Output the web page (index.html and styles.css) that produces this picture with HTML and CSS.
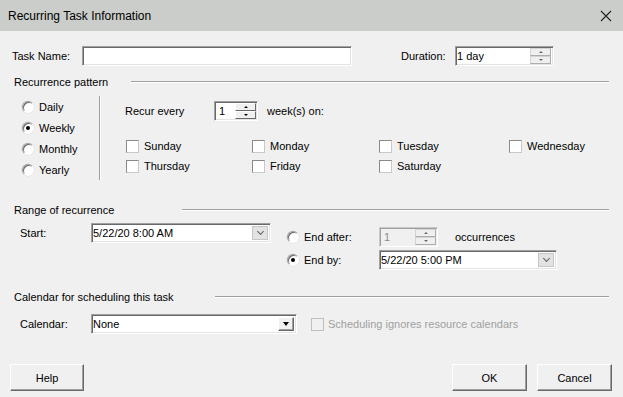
FILE: index.html
```html
<!DOCTYPE html>
<html lang="en">

<head>
    <meta charset="UTF-8">
    <meta name="viewport" content="width=device-width, initial-scale=1.0">
    <title>Recurring Task Information</title>
    <link rel="stylesheet" href="styles.css">
</head>

<body>
    <div class="dialog">
        <!-- title bar -->
        <div class="titlebar">
            <span class="title">Recurring Task Information</span>
            <svg class="close" width="12" height="12" viewBox="0 0 12 12">
                <path d="M1 1 L11 11 M11 1 L1 11" stroke="#222" stroke-width="1.1" fill="none" />
            </svg>
        </div>

        <div class="task-row">
            <label class="lbl-task">Task Name:</label>
            <div class="field task-name"></div>
            <label class="lbl-dur">Duration:</label>
            <div class="field dur">
                <span class="val">1 day</span>
                <div class="spin flat">
                    <span class="sb"><i class="up"></i></span>
                    <span class="sb"><i class="down"></i></span>
                </div>
            </div>
        </div>

        <div class="group-head">
            <span>Recurrence pattern</span>
            <span class="rule r1"></span>
        </div>

        <div class="pattern">
            <div class="freq">
                <div class="opt"><span class="radio"></span>Daily</div>
                <div class="opt"><span class="radio on"></span>Weekly</div>
                <div class="opt"><span class="radio"></span>Monthly</div>
                <div class="opt"><span class="radio"></span>Yearly</div>
            </div>
            <div class="vsep"></div>
            <div class="weekly">
                <div class="recur">
                    <span class="recur-lbl">Recur every</span>
                    <div class="field every">
                        <span class="val">1</span>
                        <div class="spin">
                            <span class="sb"><i class="up"></i></span>
                            <span class="sb"><i class="down"></i></span>
                        </div>
                    </div>
                    <span class="weeks">week(s) on:</span>
                </div>
                <div class="days">
                    <div class="opt"><span class="check"></span>Sunday</div>
                    <div class="opt"><span class="check"></span>Monday</div>
                    <div class="opt"><span class="check"></span>Tuesday</div>
                    <div class="opt"><span class="check"></span>Wednesday</div>
                    <div class="opt"><span class="check"></span>Thursday</div>
                    <div class="opt"><span class="check"></span>Friday</div>
                    <div class="opt"><span class="check"></span>Saturday</div>
                </div>
            </div>
        </div>

        <div class="group-head g2">
            <span>Range of recurrence</span>
            <span class="rule r2"></span>
        </div>

        <div class="range">
            <div class="start">
                <label class="lbl-start">Start:</label>
                <div class="field combo start-combo">
                    <span class="val">5/22/20 8:00 AM</span>
                    <span class="drop"><i class="chev"></i></span>
                </div>
            </div>
            <div class="ends">
                <div class="end-row">
                    <span class="opt end-opt"><span class="radio"></span>End after:</span>
                    <div class="field occ disabled">
                        <span class="val">1</span>
                        <div class="spin flat">
                            <span class="sb"><i class="up"></i></span>
                            <span class="sb"><i class="down"></i></span>
                        </div>
                    </div>
                    <span class="occ-lbl">occurrences</span>
                </div>
                <div class="end-row by">
                    <span class="opt end-opt"><span class="radio on"></span>End by:</span>
                    <div class="field combo end-combo">
                        <span class="val">5/22/20 5:00 PM</span>
                        <span class="drop"><i class="chev"></i></span>
                    </div>
                </div>
            </div>
        </div>

        <div class="group-head g3">
            <span>Calendar for scheduling this task</span>
            <span class="rule r3"></span>
        </div>

        <div class="cal-row">
            <label class="lbl-start">Calendar:</label>
            <div class="field combo cal-combo">
                <span class="val">None</span>
                <span class="drop classic"><i class="tri"></i></span>
            </div>
            <div class="opt off"><span class="check"></span>Scheduling ignores resource calendars</div>
        </div>

        <div class="buttons">
            <button type="button" class="btn help">Help</button>
            <button type="button" class="btn ok">OK</button>
            <button type="button" class="btn">Cancel</button>
        </div>
    </div>
</body>

</html>
```

FILE: styles.css
```css
* {
    margin: 0;
    padding: 0;
    box-sizing: border-box;
}

body {
    width: 623px;
    height: 397px;
    overflow: hidden;
    background-color: #f0f0f0;
    font-family: "Liberation Sans", Arial, sans-serif;
    font-size: 11px;
    color: #000;
}

.dialog {
    width: 623px;
    height: 397px;
}

/* title bar */
.titlebar {
    height: 31px;
    background-color: #cbcdca;
    display: flex;
    align-items: center;
    justify-content: space-between;
    padding: 0 11px 0 8px;
}

.title {
    font-size: 12px;
}

/* common bits */
.field {
    position: relative;
    height: 20px;
    background-color: #fff;
    border: 1px solid;
    border-color: #a0a0a0 #fff #fff #a0a0a0;
    box-shadow: inset 1px 1px 0 #696969, inset -1px -1px 0 #e3e3e3;
    display: flex;
    align-items: center;
}

.field .val {
    padding-left: 3px;
    font-size: 11px;
}

.opt {
    display: flex;
    align-items: center;
    white-space: nowrap;
}

.radio {
    width: 12px;
    height: 12px;
    border-radius: 50%;
    background-color: #fff;
    border: 1px solid;
    border-color: #a0a0a0 #fff #fff #a0a0a0;
    box-shadow: inset 1px 1px 0 #696969, 0 0 0 0.5px #d8d8d8;
    margin-right: 5px;
    display: flex;
    align-items: center;
    justify-content: center;
}

.radio.on::after {
    content: "";
    width: 4px;
    height: 4px;
    border-radius: 50%;
    background-color: #000;
}

.check {
    width: 13px;
    height: 13px;
    background-color: #fff;
    border: 1px solid #8a8a8a;
    border-right-color: #c8c8c8;
    border-bottom-color: #c8c8c8;
    margin-right: 5px;
}

/* spin buttons */
.spin {
    position: absolute;
    right: 1px;
    top: 1px;
    width: 21px;
    height: 16px;
    display: flex;
    flex-direction: column;
}

.sb {
    flex: 1;
    background-color: #f0f0f0;
    border: 1px solid;
    border-color: #fff #696969 #696969 #fff;
    display: flex;
    align-items: center;
    justify-content: center;
}

.spin.flat .sb {
    border-color: #d4d4d4 #adadad #adadad #d4d4d4;
    background-color: #efefef;
}

.sb i {
    width: 0;
    height: 0;
    border-left: 2px solid transparent;
    border-right: 2px solid transparent;
}

.sb i.up {
    border-bottom: 2px solid #000;
}

.sb i.down {
    border-top: 2px solid #000;
}

.spin.flat .sb i.up {
    border-bottom-color: #6a6a6a;
}

.spin.flat .sb i.down {
    border-top-color: #6a6a6a;
}

/* combo dropdown */
.drop {
    position: absolute;
    right: 2px;
    top: 2px;
    width: 16px;
    height: 14px;
    background-color: #e2e2e2;
    border: 1px solid #c6c6c6;
    display: flex;
    align-items: center;
    justify-content: center;
}

.chev {
    width: 5px;
    height: 5px;
    border-right: 1px solid #606060;
    border-bottom: 1px solid #606060;
    transform: translateY(-2px) rotate(45deg);
}

.drop.classic {
    background-color: #f0f0f0;
    border-color: #fff #696969 #696969 #fff;
    box-shadow: inset -1px -1px 0 #a0a0a0;
}

.tri {
    width: 0;
    height: 0;
    border-left: 3.5px solid transparent;
    border-right: 3.5px solid transparent;
    border-top: 4px solid #000;
}

/* task row */
.task-row {
    display: flex;
    align-items: center;
    margin-top: 15px;
    padding-left: 12px;
    height: 20px;
}

.lbl-task {
    width: 70px;
}

.task-name {
    width: 270px;
}

.lbl-dur {
    margin-left: 49px;
    width: 54px;
}

.dur {
    width: 99px;
}

.dur .val {
    padding-left: 1px;
}

.dur .spin {
    right: 2px;
}

/* group headings */
.group-head {
    display: flex;
    align-items: center;
    height: 14px;
    margin-top: 9px;
    padding: 0 14px;
}

.rule {
    flex: 1;
    height: 2px;
    border-top: 1px solid #a0a0a0;
    border-bottom: 1px solid #fff;
}

.r1 {
    margin-left: 23px;
}

.r2 {
    margin-left: 68px;
}

.r3 {
    margin-left: 41px;
}

.g2 {
    margin-top: 23px;
}

.g3 {
    margin-top: 20px;
}

/* recurrence pattern */
.pattern {
    display: flex;
    height: 84px;
    margin-top: 7px;
}

.freq {
    width: 99px;
    padding-left: 22px;
}

.freq .opt {
    height: 21px;
}

.vsep {
    width: 2px;
    border-left: 1px solid #a0a0a0;
    border-right: 1px solid #fff;
}

.weekly {
    padding-left: 24px;
}

.recur {
    display: flex;
    align-items: center;
    margin-top: 5px;
    height: 20px;
}

.recur-lbl {
    width: 89px;
}

.every {
    width: 44px;
}

.every .val {
    padding-left: 4px;
}

.every .spin {
    right: 1px;
}

.weeks {
    margin-left: 9px;
}

.days {
    display: grid;
    grid-template-columns: 126px 127px 130px auto;
    grid-auto-rows: 20px;
    margin-top: 15px;
    margin-left: 1px;
}

.days .check {
    margin-right: 5px;
}

/* range of recurrence */
.range {
    display: flex;
    margin-top: 6px;
    height: 47px;
}

.start {
    display: flex;
    align-items: center;
    height: 20px;
    padding-left: 20px;
}

.lbl-start {
    width: 71px;
}

.start-combo {
    width: 180px;
}

.start-combo .val,
.end-combo .val,
.cal-combo .val {
    padding-left: 1px;
}

.ends {
    margin-left: 16px;
    margin-top: 4px;
}

.end-row {
    display: flex;
    align-items: center;
    height: 20px;
}

.end-row.by {
    margin-top: 3px;
}

.end-opt {
    width: 92px;
}

.occ {
    width: 59px;
}

.occ.disabled {
    background-color: #f0f0f0;
    border-color: #c8c8c8 #fff #fff #c8c8c8;
    box-shadow: inset 1px 1px 0 #a0a0a0;
    color: #8a8a8a;
}

.occ .val {
    padding-left: 4px;
}

.occ-lbl {
    margin-left: 17px;
}

.end-combo {
    width: 178px;
}

/* calendar */
.cal-row {
    display: flex;
    align-items: center;
    margin-top: 10px;
    padding-left: 20px;
    height: 20px;
}

.cal-combo {
    width: 206px;
}

.opt.off {
    margin-left: 14px;
    color: #a0a0a0;
}

.opt.off .check {
    background-color: #f0f0f0;
    border-color: #c0c0c0;
    margin-right: 4px;
}

/* buttons */
.buttons {
    display: flex;
    gap: 10px;
    margin-top: 30px;
    padding: 0 11px 0 10px;
}

.btn {
    width: 75px;
    height: 27px;
    font-family: "Liberation Sans", Arial, sans-serif;
    font-size: 11px;
    color: #000;
    background-color: #f0f0f0;
    border: 1px solid;
    border-color: #fff #696969 #696969 #fff;
    box-shadow: inset -1px -1px 0 #a0a0a0;
}

.btn.help {
    width: 74px;
    margin-right: auto;
}
```
